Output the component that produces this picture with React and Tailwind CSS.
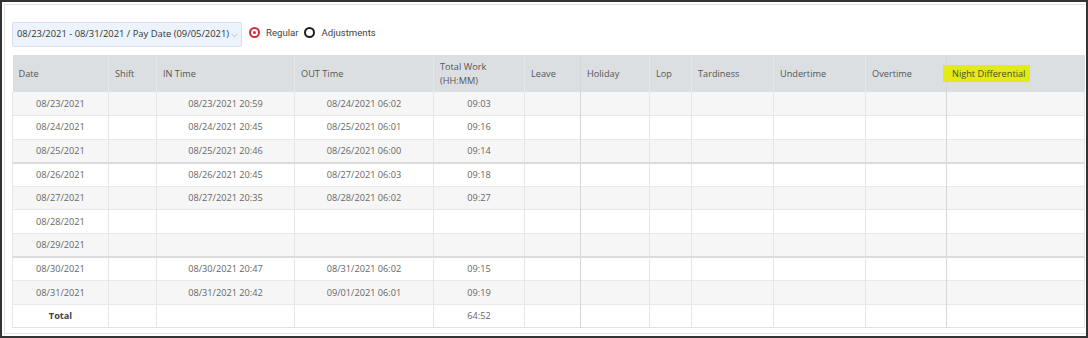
const columns = [
  { label: "Date", width: 96 },
  { label: "Shift", width: 48 },
  { label: "IN Time", width: 138 },
  { label: "OUT Time", width: 139 },
  { label: "Total Work", sub: "(HH:MM)", width: 91 },
  { label: "Leave", width: 56 },
  { label: "Holiday", width: 69 },
  { label: "Lop", width: 42 },
  { label: "Tardiness", width: 82 },
  { label: "Undertime", width: 92 },
  { label: "Overtime", width: 81 },
  { label: "Night Differential", width: 138, highlight: true },
];

const rows = [
  ["08/23/2021", "08/23/2021 20:59", "08/24/2021 06:02", "09:03"],
  ["08/24/2021", "08/24/2021 20:45", "08/25/2021 06:01", "09:16"],
  ["08/25/2021", "08/25/2021 20:46", "08/26/2021 06:00", "09:14", true],
  ["08/26/2021", "08/26/2021 20:45", "08/27/2021 06:03", "09:18"],
  ["08/27/2021", "08/27/2021 20:35", "08/28/2021 06:02", "09:27"],
  ["08/28/2021", "", "", ""],
  ["08/29/2021", "", "", "", true],
  ["08/30/2021", "08/30/2021 20:47", "08/31/2021 06:02", "09:15"],
  ["08/31/2021", "08/31/2021 20:42", "09/01/2021 06:01", "09:19"],
];

function Radio({ checked, label }) {
  return (
    <label className="flex items-center gap-[6px]">
      {checked ? (
        <span className="w-[11px] h-[11px] rounded-full border-2 border-[#d52b35] flex items-center justify-center">
          <span className="w-[3px] h-[3px] rounded-full bg-[#d52b35]" />
        </span>
      ) : (
        <span className="w-[11px] h-[11px] rounded-full border-2 border-[#1e1e1e]" />
      )}
      <span>{label}</span>
    </label>
  );
}

function cellBorder(i) {
  // Holiday and Night Differential columns have a slightly darker left rule
  if (i === 6 || i === 11) return "border-l border-l-[#d6d6d6]";
  return "border-l border-l-[#e6e6e6]";
}

export default function App() {
  return (
    <div className="w-[1088px] h-[338px] bg-white border-2 border-[#333] font-['Open_Sans',sans-serif]">
      <div className="ml-[2px] mt-[2px] h-[330px] border border-[#e2e2e2] border-r-0 pl-[7px] pt-[17px]">
        {/* Filters */}
        <div className="flex items-center gap-[7px]">
          <div className="w-[230px] h-[25px] flex items-center justify-between pl-[4px] pr-[3px] bg-[#edf3fa] border border-[#d5e1ee] rounded-[2px] text-[9.4px] text-[#333]">
            <span>08/23/2021 - 08/31/2021 / Pay Date (09/05/2021)</span>
            <svg width="7" height="5" viewBox="0 0 7 5" className="mt-[1px]">
              <path d="M0.5 0.8 L3.5 3.8 L6.5 0.8" fill="none" stroke="#a7b0ba" strokeWidth="0.8" />
            </svg>
          </div>
          <div className="flex items-center gap-[6px] text-[9.6px] text-[#444] font-['Roboto',sans-serif] -mt-[3px]">
            <Radio checked label="Regular" />
            <Radio label="Adjustments" />
          </div>
        </div>

        {/* Table */}
        <table className="mt-[8px] table-fixed border-collapse w-[1072px] text-[9.2px] text-[#666]">
          <colgroup>
            {columns.map((c) => (
              <col key={c.label} style={{ width: c.width }} />
            ))}
          </colgroup>
          <thead>
            <tr className="h-[37px] bg-[#dcdfe2]">
              {columns.map((c, i) => (
                <th
                  key={c.label}
                  className={`text-left font-normal text-[#555] pl-[6px] align-middle ${i > 0 ? cellBorder(i) : ""}`}
                >
                  {c.highlight ? (
                    <span className="bg-[#e3ec12] pl-[9px] pr-[5px] py-[2px] -ml-[10px] text-[#4a4a30]">{c.label}</span>
                  ) : c.sub ? (
                    <span className="block leading-[14px]">
                      {c.label}
                      <br />
                      {c.sub}
                    </span>
                  ) : (
                    c.label
                  )}
                </th>
              ))}
            </tr>
          </thead>
          <tbody>
            {rows.map((r, ri) => (
              <tr
                key={r[0]}
                className={`h-[23.6px] ${ri % 2 === 0 ? "bg-[#f6f6f6]" : "bg-white"} ${
                  r[4] ? "border-b-2 border-b-[#dcdcdc]" : "border-b border-b-[#e8e8e8]"
                }`}
              >
                {columns.map((c, i) => {
                  const val = i === 0 ? r[0] : i === 2 ? r[1] : i === 3 ? r[2] : i === 4 ? r[3] : "";
                  return (
                    <td
                      key={c.label}
                      className={`text-center ${i === 0 ? "border-l border-l-[#e6e6e6]" : cellBorder(i)} ${
                        i === 11 ? "border-r border-r-[#e6e6e6]" : ""
                      }`}
                    >
                      {val}
                    </td>
                  );
                })}
              </tr>
            ))}
            <tr className="h-[23.6px] bg-white border-b border-b-[#e2e2e2]">
              {columns.map((c, i) => (
                <td
                  key={c.label}
                  className={`text-center ${i === 0 ? "border-l border-l-[#e6e6e6] font-bold text-[#444]" : cellBorder(i)} ${
                    i === 11 ? "border-r border-r-[#e6e6e6]" : ""
                  }`}
                >
                  {i === 0 ? "Total" : i === 4 ? "64:52" : ""}
                </td>
              ))}
            </tr>
          </tbody>
        </table>
      </div>
    </div>
  );
}
